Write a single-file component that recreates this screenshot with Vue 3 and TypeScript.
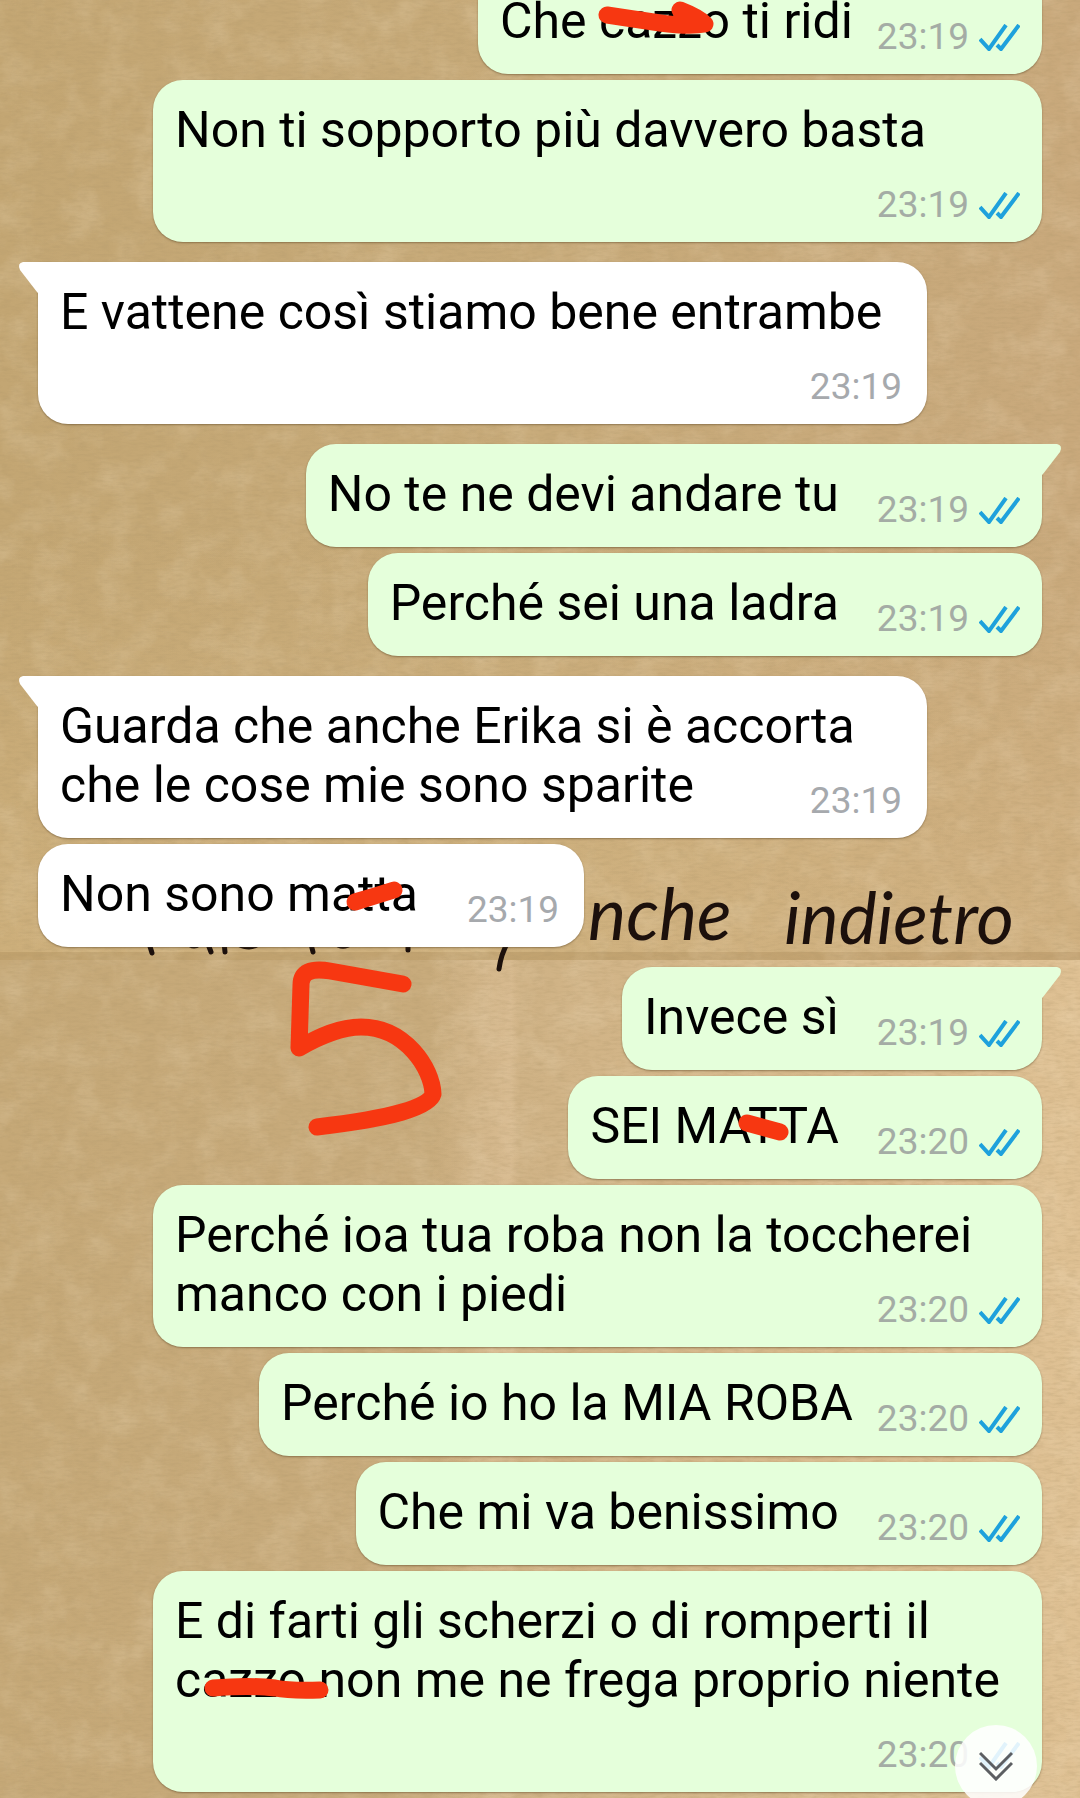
<script setup lang="ts">
interface Message {
  text: string
  time: string
  mine: boolean
  first?: boolean
  layout?: 'near' | 'wide' | 'below'
}

const messages: Message[] = [
  { text: 'Che cazzo ti ridi', time: '23:19', mine: true, layout: 'near' },
  { text: 'Non ti sopporto più davvero basta', time: '23:19', mine: true, layout: 'below' },
  { text: 'E vattene così stiamo bene entrambe', time: '23:19', mine: false, first: true, layout: 'below' },
  { text: 'No te ne devi andare tu', time: '23:19', mine: true, first: true },
  { text: 'Perché sei una ladra', time: '23:19', mine: true },
  { text: 'Guarda che anche Erika si è accorta che le cose mie sono sparite', time: '23:19', mine: false, first: true, layout: 'wide' },
  { text: 'Non sono matta', time: '23:19', mine: false },
  { text: 'Invece sì', time: '23:19', mine: true, first: true },
  { text: 'SEI MATTA', time: '23:20', mine: true },
  { text: 'Perché ioa tua roba non la toccherei manco con i piedi', time: '23:20', mine: true, layout: 'wide' },
  { text: 'Perché io ho la MIA ROBA', time: '23:20', mine: true, layout: 'near' },
  { text: 'Che mi va benissimo', time: '23:20', mine: true },
  { text: 'E di farti gli scherzi o di romperti il cazzo non me ne frega proprio niente', time: '23:20', mine: true, layout: 'below' },
]
</script>

<template>
  <main class="chat">
    <svg class="wallpaper" viewBox="0 0 1080 1798" preserveAspectRatio="xMidYMin slice" aria-hidden="true">
      <defs>
        <linearGradient id="upper" x1="0" y1="0" x2="1" y2="0">
          <stop offset="0" stop-color="#c3a673" />
          <stop offset="0.5" stop-color="#c7aa79" />
          <stop offset="1" stop-color="#c9a97c" />
        </linearGradient>
        <linearGradient id="glow" x1="0" y1="0" x2="0" y2="1">
          <stop offset="0.55" stop-color="#dcbd88" stop-opacity="0" />
          <stop offset="1" stop-color="#dcbd88" stop-opacity="0.4" />
        </linearGradient>
        <linearGradient id="lower" x1="0" y1="0" x2="1" y2="0">
          <stop offset="0" stop-color="#c5a877" />
          <stop offset="0.4" stop-color="#c8ab7c" />
          <stop offset="0.48" stop-color="#cfb285" />
          <stop offset="1" stop-color="#dfc194" />
        </linearGradient>
        <linearGradient id="crease" x1="0" y1="0" x2="1" y2="0">
          <stop offset="0" stop-color="#e3c69f" stop-opacity="0" />
          <stop offset="0.9" stop-color="#e3c69f" stop-opacity="0.45" />
          <stop offset="1" stop-color="#e3c69f" stop-opacity="0" />
        </linearGradient>
        <filter id="weave" x="0" y="0" width="100%" height="100%">
          <feTurbulence type="fractalNoise" baseFrequency="0.09 0.35" numOctaves="3" seed="4" />
          <feColorMatrix values="0 0 0 0 0.42  0 0 0 0 0.3  0 0 0 0 0.14  1.4 0 0 0 -0.56" />
        </filter>
        <filter id="mottle" x="0" y="0" width="100%" height="100%">
          <feTurbulence type="fractalNoise" baseFrequency="0.03 0.03" numOctaves="5" seed="9" />
          <feColorMatrix values="0 0 0 0 1  0 0 0 0 0.88  0 0 0 0 0.68  0 1.2 0 0 -0.5" />
        </filter>
      </defs>
      <rect width="1080" height="960" fill="url(#upper)" />
      <rect width="1080" height="960" fill="url(#glow)" />
      <rect y="960" width="1080" height="838" fill="url(#lower)" />
      <rect x="430" y="960" width="90" height="838" fill="url(#crease)" />
      <rect y="952" width="1080" height="8" fill="#9f7c4c" opacity="0.28" />
      <rect width="1080" height="1798" filter="url(#mottle)" opacity="0.3" />
      <rect width="1080" height="1798" filter="url(#weave)" opacity="0.4" />
      <g class="pen">
        <text x="588" y="940">nche</text>
        <text x="784" y="944">indietro</text>
        <path d="M148 940 l4 13 M185 941 q8 8 14 3 M208 944 l3 8 M224 942 l1 10 M238 944 q12 6 20 0 M310 940 l3 12 M334 942 q8 8 18 1 M408 940 v10 M508 942 q-7 12 -9 27" />
      </g>
    </svg>

    <ol class="thread">
      <li
        v-for="(m, i) in messages"
        :key="i"
        class="bubble"
        :class="[m.mine ? 'mine' : 'theirs', m.layout, { first: m.first }]"
      >
        <svg v-if="m.first" class="tail" viewBox="0 0 21 31" aria-hidden="true">
          <path d="M0 0 H15 Q21 1 18 8 L1 30 L0 31 Z" />
        </svg>
        <p class="text">{{ m.text }}</p>
        <div class="meta">
          <time>{{ m.time }}</time>
          <svg v-if="m.mine" class="ticks" viewBox="0 0 41 27" aria-label="Letto">
            <path d="M1 15 L10 25 L27 1 M18 21 L22 25 L40 1" />
          </svg>
        </div>
      </li>
    </ol>

    <svg class="marker" viewBox="0 0 1080 1798" preserveAspectRatio="xMidYMin slice" aria-hidden="true">
      <path d="M607 15 L660 23 Q690 27 705 24 Q698 17 680 10 L686 20" />
      <path d="M355 902 Q375 896 394 890" />
      <path d="M747 1123 L780 1132" />
      <path d="M213 1688 Q250 1685 275 1688 Q290 1691 320 1690" />
      <path d="M403 984 L330 971 Q301 966 301 985 L299 1048 C320 1036 340 1027 361 1027 C405 1027 432 1068 433 1094 Q428 1114 317 1127" />
    </svg>

    <button class="jump" type="button" aria-label="Vai all'ultimo messaggio">
      <svg viewBox="0 0 34 30" aria-hidden="true">
        <path d="M1 2 L17 18 L33 2 M1 12 L17 28 L33 12" />
      </svg>
    </button>
  </main>
</template>

<style>
body {
  margin: 0;
}
</style>

<style scoped>
.chat {
  position: relative;
  box-sizing: border-box;
  min-height: 100vh;
  overflow: hidden;
  padding: 0 38px 6px;
  background: #c8aa7b;
  font-family: Roboto, "Liberation Sans", sans-serif;
}

.wallpaper,
.marker {
  position: absolute;
  inset: 0;
  width: 100%;
  height: 100%;
}

.pen text {
  font: italic 400 72px Lato, sans-serif;
  fill: #1c100c;
}

.pen path {
  fill: none;
  stroke: #1c100c;
  stroke-width: 5;
  stroke-linecap: round;
}

.marker {
  pointer-events: none;
}

.marker path {
  fill: none;
  stroke: #f73711;
  stroke-width: 17;
  stroke-linecap: round;
  stroke-linejoin: round;
}

.thread {
  position: relative;
  display: flex;
  flex-direction: column;
  gap: 6px;
  margin: -29px 0 0;
  padding: 0;
  list-style: none;
}

.bubble {
  --paper: #e5ffdb;
  position: relative;
  box-sizing: border-box;
  display: flex;
  align-items: flex-end;
  gap: 38px;
  max-width: calc(100% - 115px);
  padding: 21px 22px 15px;
  border-radius: 30px;
  background: var(--paper);
  box-shadow: 0 1px 2px rgba(70, 50, 20, 0.45);
  color: #000;
  font-size: 50px;
  line-height: 59px;
}

.mine {
  align-self: flex-end;
}

.theirs {
  --paper: #fff;
  align-self: flex-start;
  gap: 49px;
  padding-right: 25px;
}

.near {
  gap: 24px;
}

.text {
  margin: 0 0 8px;
}

.meta {
  display: flex;
  align-items: flex-end;
  gap: 10px;
  color: #a4aca5;
  font-size: 37px;
  line-height: 44px;
}

.theirs .meta {
  color: #a6a9ad;
}

/* the time takes a row of its own */
.below {
  flex-direction: column;
  gap: 15px;
  width: 100%;
}

.below .text {
  align-self: flex-start;
}

/* the time shares the last row of the text */
.wide {
  display: flow-root;
  width: 100%;
}

.wide .text {
  display: inline;
}

.wide .meta {
  float: right;
  margin-top: 23px;
}

.first {
  margin-top: 14px;
}

.mine.first {
  border-top-right-radius: 0;
}

.theirs.first {
  border-top-left-radius: 0;
}

.tail {
  position: absolute;
  top: 0;
  left: 100%;
  width: 21px;
  height: 31px;
  fill: var(--paper);
}

.theirs .tail {
  right: 100%;
  left: auto;
  transform: scaleX(-1);
}

.ticks {
  width: 41px;
  height: 27px;
  margin-bottom: 8px;
  fill: none;
  stroke: #1ea1dc;
  stroke-width: 4;
}

.jump {
  position: absolute;
  right: 43px;
  bottom: -9px;
  display: grid;
  place-items: center;
  width: 82px;
  height: 82px;
  padding: 0;
  border: 0;
  border-radius: 50%;
  background: rgba(255, 255, 255, 0.87);
}

.jump svg {
  width: 34px;
  height: 30px;
  fill: none;
  stroke: #5c5f62;
  stroke-width: 3;
}
</style>
